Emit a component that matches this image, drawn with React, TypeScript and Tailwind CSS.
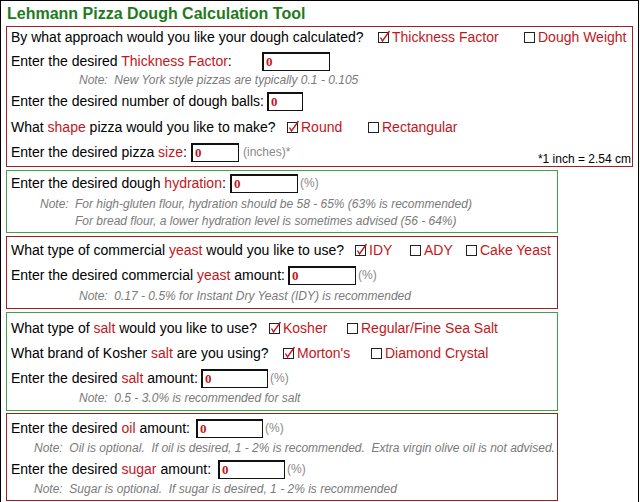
import React from "react";

const RED_TEXT = "text-[#c3161c]";

function Red({ children }: { children: React.ReactNode }) {
  return <span className={RED_TEXT}>{children}</span>;
}

function Check({ checked }: { checked?: boolean }) {
  return (
    <svg width="14" height="14" viewBox="0 0 14 14" className="shrink-0">
      <rect x="1.5" y="2.5" width="10" height="10" fill="white" stroke="#222" strokeWidth="1" />
      {checked && (
        <path d="M3.5 7.5 L5.5 11 L12.5 1" fill="none" stroke="#c3161c" strokeWidth="1.4" />
      )}
    </svg>
  );
}

function Option({ checked, label, w }: { checked?: boolean; label: string; w?: string }) {
  return (
    <span className={`flex items-center gap-[1px] ${w ?? ""}`}>
      <Check checked={checked} />
      <span className={RED_TEXT}>{label}</span>
    </span>
  );
}

function NumInput({ w }: { w: string }) {
  return (
    <input
      readOnly
      value="0"
      className={`${w} h-[19px] border border-l-2 border-t-2 border-[#111] bg-white px-[2px] font-['Liberation_Serif',serif] text-[13px] font-bold text-[#c3161c] outline-none`}
    />
  );
}

function Unit({ children }: { children: React.ReactNode }) {
  return <span className="ml-[2px] text-[12px] text-[#8a8a8a]">{children}</span>;
}

function Note({ pl, children }: { pl: string; children: React.ReactNode }) {
  return (
    <div className={`flex h-[16px] items-center ${pl} whitespace-pre text-[12px] italic text-[#7a7a7a]`}>
      {children}
    </div>
  );
}

export default function App() {
  return (
    <div className="h-[502px] w-[640px] overflow-hidden bg-white font-['Liberation_Sans',Arial,sans-serif] text-[14px] text-black">
      <div className="h-[540px] w-[639px] border border-black">
        <div className="flex h-[25px] items-center pl-[6px] text-[16px] font-bold text-[#1f7a22]">
          Lehmann Pizza Dough Calculation Tool
        </div>

        {/* approach / thickness / balls / shape / size */}
        <div className="ml-[5px] h-[141px] w-[627px] border border-[#a31d22] pl-[4px] pr-[1px]">
          <div className="flex h-[20px] items-center">
            <span className="w-[366px]">By what approach would you like your dough calculated?</span>
            <Option checked label="Thickness Factor" w="w-[146px]" />
            <Option label="Dough Weight" />
          </div>
          <div className="mt-[4px] flex h-[20px] items-center">
            <span className="w-[251px]">
              Enter the desired <Red>Thickness Factor</Red>:
            </span>
            <NumInput w="w-[68px]" />
          </div>
          <Note pl="pl-[68px] mt-[1px]">Note:  New York style pizzas are typically 0.1 - 0.105</Note>
          <div className="mt-[3px] flex h-[20px] items-center">
            <span className="w-[256px]">Enter the desired number of dough balls:</span>
            <NumInput w="w-[36px]" />
          </div>
          <div className="mt-[6px] flex h-[20px] items-center">
            <span className="w-[275px]">
              What <Red>shape</Red> pizza would you like to make?
            </span>
            <Option checked label="Round" w="w-[81px]" />
            <Option label="Rectangular" />
          </div>
          <div className="mt-[5px] flex h-[20px] items-center">
            <span className="w-[180px]">
              Enter the desired pizza <Red>size</Red>:
            </span>
            <NumInput w="w-[48px]" />
            <span className="ml-[4px] text-[12px] text-[#8a8a8a]">(inches)*</span>
            <span className="mb-[-4px] ml-auto self-end text-[12px] leading-[14px]">*1 inch = 2.54 cm</span>
          </div>
        </div>

        {/* hydration */}
        <div className="ml-[5px] mt-[3px] h-[63px] w-[552px] border border-[#41a344] pl-[4px]">
          <div className="mt-[2px] flex h-[20px] items-center">
            <span className="w-[219px]">
              Enter the desired dough <Red>hydration</Red>:
            </span>
            <NumInput w="w-[68px]" />
            <Unit>(%)</Unit>
          </div>
          <div className="mt-[3px] flex pl-[29px] text-[12px] italic text-[#7a7a7a]">
            <span className="w-[35px] leading-[16px]">Note:</span>
            <div className="flex flex-col gap-[1px]">
              <span className="leading-[16px]">For high-gluten flour, hydration should be 58 - 65% (63% is recommended)</span>
              <span className="leading-[16px]">For bread flour, a lower hydration level is sometimes advised (56 - 64%)</span>
            </div>
          </div>
        </div>

        {/* yeast */}
        <div className="ml-[5px] mt-[3px] h-[73px] w-[552px] border border-[#a31d22] pl-[4px]">
          <div className="mt-[3px] flex h-[20px] items-center">
            <span className="w-[343px]">
              What type of commercial <Red>yeast</Red> would you like to use?
            </span>
            <Option checked label="IDY" w="w-[55px]" />
            <Option label="ADY" w="w-[56px]" />
            <Option label="Cake Yeast" />
          </div>
          <div className="mt-[5px] flex h-[20px] items-center">
            <span className="w-[277px]">
              Enter the desired commercial <Red>yeast</Red> amount:
            </span>
            <NumInput w="w-[68px]" />
            <Unit>(%)</Unit>
          </div>
          <Note pl="pl-[68px] mt-[3px]">Note:  0.17 - 0.5% for Instant Dry Yeast (IDY) is recommended</Note>
        </div>

        {/* salt */}
        <div className="ml-[5px] mt-[3px] h-[99px] w-[552px] border border-[#41a344] pl-[4px]">
          <div className="mt-[5px] flex h-[20px] items-center">
            <span className="w-[257px]">
              What type of <Red>salt</Red> would you like to use?
            </span>
            <Option checked label="Kosher" w="w-[78px]" />
            <Option label="Regular/Fine Sea Salt" />
          </div>
          <div className="mt-[5px] flex h-[20px] items-center">
            <span className="w-[271px]">
              What brand of Kosher <Red>salt</Red> are you using?
            </span>
            <Option checked label="Morton's" w="w-[88px]" />
            <Option label="Diamond Crystal" />
          </div>
          <div className="mt-[5px] flex h-[20px] items-center">
            <span className="w-[190px]">
              Enter the desired <Red>salt</Red> amount:
            </span>
            <NumInput w="w-[67px]" />
            <Unit>(%)</Unit>
          </div>
          <Note pl="pl-[68px] mt-[2px]">Note:  0.5 - 3.0% is recommended for salt</Note>
        </div>

        {/* oil / sugar */}
        <div className="ml-[5px] mt-[2px] h-[88px] w-[552px] border border-[#a31d22] pl-[4px]">
          <div className="mt-[4px] flex h-[20px] items-center">
            <span className="w-[185px]">
              Enter the desired <Red>oil</Red> amount:
            </span>
            <NumInput w="w-[67px]" />
            <Unit>(%)</Unit>
          </div>
          <Note pl="pl-[23px] mt-[2px]">
            Note:  Oil is optional.  If oil is desired, 1 - 2% is recommended.  Extra virgin olive oil is not advised.
          </Note>
          <div className="mt-[3px] flex h-[20px] items-center">
            <span className="w-[207px]">
              Enter the desired <Red>sugar</Red> amount:
            </span>
            <NumInput w="w-[67px]" />
            <Unit>(%)</Unit>
          </div>
          <Note pl="pl-[23px] mt-[2px]">Note:  Sugar is optional.  If sugar is desired, 1 - 2% is recommended</Note>
        </div>
      </div>
    </div>
  );
}
